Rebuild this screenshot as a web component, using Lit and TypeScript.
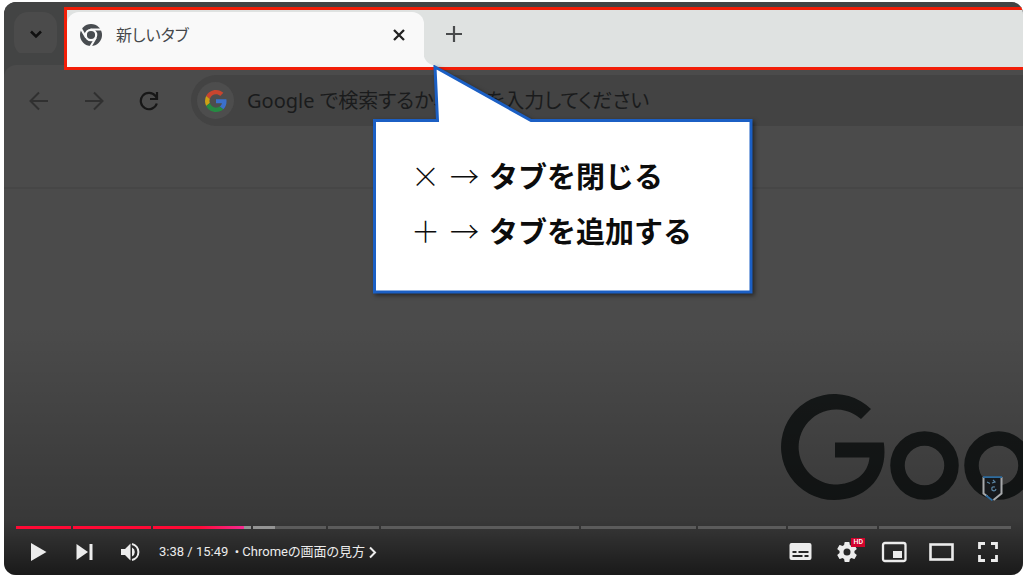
import { LitElement, html, css, svg } from "lit";
import { customElement, state } from "lit/decorators.js";

interface Chapter {
  span: number;
  played: number;
  loaded: number;
}

const CHAPTERS: Chapter[] = [
  { span: 55, played: 100, loaded: 100 },
  { span: 78, played: 100, loaded: 100 },
  { span: 98, played: 93, loaded: 100 },
  { span: 74, played: 0, loaded: 31 },
  { span: 51, played: 0, loaded: 0 },
  { span: 198, played: 0, loaded: 0 },
  { span: 115, played: 0, loaded: 0 },
  { span: 89, played: 0, loaded: 0 },
  { span: 89, played: 0, loaded: 0 },
  { span: 132, played: 0, loaded: 0 },
];

const icon = (size: number, body: unknown) =>
  html`<svg width=${size} height=${size} viewBox="0 0 ${size} ${size}" aria-hidden="true">${body}</svg>`;

/* The browser window shown inside the video frame. */
@customElement("browser-scene")
class BrowserScene extends LitElement {
  static styles = css`
    :host {
      display: flex;
      flex-direction: column;
      flex: 1;
      font-family: "Noto Sans", "Noto Sans CJK JP", sans-serif;
      font-feature-settings: "palt";
      background: #4b4b4b;
    }
    button {
      display: grid;
      place-items: center;
      padding: 0;
      border: 0;
      background: none;
      font: inherit;
    }
    svg {
      display: block;
    }
    .strip {
      display: flex;
      gap: 7px;
      height: 63px;
      box-sizing: border-box;
      padding: 5px 0 0 10px;
      background: #434444;
    }
    .menu {
      width: 43px;
      height: 44px;
      margin-top: 5px;
      border-radius: 14px;
      background: #4b4b4b;
    }
    .frame {
      position: relative;
      z-index: 1;
      display: flex;
      flex: 1;
      box-sizing: border-box;
      height: 63px;
      border: 3px solid #f11e08;
      border-right: 0;
      padding-top: 2px;
      background: #dfe2e1;
    }
    .tab {
      position: relative;
      display: flex;
      align-items: center;
      width: 357px;
      box-sizing: border-box;
      padding: 0 15px 10px 12px;
      border-radius: 12px 12px 0 0;
      background: #f9f9f9;
      color: #45484b;
      font-size: 16px;
      line-height: 24px;
    }
    .tab::after {
      content: "";
      position: absolute;
      left: 100%;
      bottom: 0;
      width: 12px;
      height: 14px;
      background: radial-gradient(circle at 100% 0, transparent 12px, #f9f9f9 13px);
    }
    .name {
      flex: 1;
      margin-left: 13px;
    }
    .tab button {
      width: 20px;
      height: 20px;
    }
    .add {
      width: 24px;
      height: 44px;
      margin-left: 18px;
    }
    .toolbar {
      display: flex;
      align-items: flex-start;
      height: 124px;
      box-sizing: border-box;
      padding: 10px 0 0 22px;
      border-radius: 12px 0 0 0;
      border-bottom: 2px solid #464646;
      background: #4b4b4b;
      box-shadow: -12px -12px 0 #434444;
    }
    .nav {
      display: flex;
      align-items: center;
      gap: 29px;
      height: 51px;
    }
    .nav button {
      width: 26px;
    }
    .omnibox {
      display: flex;
      align-items: center;
      flex: 1;
      gap: 13px;
      height: 51px;
      margin-left: 29px;
      padding-left: 6px;
      border-radius: 26px 0 0 26px;
      background: #434343;
    }
    .badge {
      display: grid;
      place-items: center;
      width: 37px;
      height: 37px;
      border-radius: 50%;
      background: #4d4d4d;
    }
    .search {
      flex: 1;
      min-width: 0;
      padding: 0;
      border: 0;
      outline: 0;
      background: none;
      color: #1a1b1c;
      font: inherit;
      font-feature-settings: inherit;
      font-size: 20px;
      line-height: 30px;
    }
    .search::placeholder {
      color: #1a1b1c;
      opacity: 1;
    }
    .page {
      display: flex;
      flex: 1;
      justify-content: flex-end;
      align-items: flex-end;
      overflow: hidden;
      padding-bottom: 74px;
    }
  `;

  render() {
    return html`
      <div class="strip">
        <button class="menu" aria-label="タブを検索">
          ${icon(16, svg`<path d="M3 5.500 8 10.500 13 5.500" fill="none" stroke="#101010" stroke-width="2.600"/>`)}
        </button>
        <div class="frame">
          <div class="tab">
            ${icon(24, svg`
              <circle cx="12" cy="12" r="11" fill="#484c50"/>
              <circle cx="12" cy="12" r="5.200" fill="#484c50" stroke="#f9f9f9" stroke-width="2.200"/>
              <path d="M11.500 6.500H22.500M7.200 14.700 1.800 5.400M16.900 14.500 11.300 24" stroke="#f9f9f9" stroke-width="2.100" fill="none"/>`)}
            <span class="name">新しいタブ</span>
            <button aria-label="タブを閉じる">
              ${icon(16, svg`<path d="m3 3 10 10M13 3 3 13" stroke="#222" stroke-width="2.300"/>`)}
            </button>
          </div>
          <button class="add" aria-label="新しいタブ">
            ${icon(18, svg`<path d="M9 1v16M1 9h16" stroke="#484a4b" stroke-width="2.200"/>`)}
          </button>
        </div>
      </div>
      <div class="toolbar">
        <div class="nav">
          <button aria-label="戻る">
            ${icon(20, svg`<path d="M19 10H2M10 1.500 1.500 10 10 18.500" fill="none" stroke="#303030" stroke-width="2"/>`)}
          </button>
          <button aria-label="進む">
            ${icon(20, svg`<path d="M1 10h17M10 1.500 18.500 10 10 18.500" fill="none" stroke="#303030" stroke-width="2"/>`)}
          </button>
          <button aria-label="再読み込み">
            ${icon(20, svg`<path d="M17.800 12.500A8.200 8.200 0 1 1 16.500 5L18 7" fill="none" stroke="#171717" stroke-width="2.200"/><path d="M18 1v7h-7" fill="none" stroke="#171717" stroke-width="2.200"/>`)}
          </button>
        </div>
        <div class="omnibox">
          <span class="badge">
            <svg width="22" height="22" viewBox="0 0 48 48" aria-hidden="true">
              <path fill="#c8452f" d="M24 9.500c3.540 0 6.710 1.220 9.210 3.600l6.850-6.850C35.900 2.380 30.470 0 24 0 14.620 0 6.510 5.380 2.560 13.220l7.980 6.190C12.430 13.720 17.740 9.500 24 9.500z"/>
              <path fill="#3b70cc" d="M46.980 24.550c0-1.570-.15-3.090-.38-4.550H24v9.020h12.940c-.58 2.960-2.260 5.480-4.780 7.180l7.730 6c4.510-4.180 7.090-10.360 7.090-17.650z"/>
              <path fill="#cda015" d="M10.530 28.590A14.500 14.500 0 0 1 9.770 24c0-1.600.27-3.140.76-4.590l-7.980-6.190A23.900 23.900 0 0 0 0 24c0 3.880.92 7.540 2.560 10.780z"/>
              <path fill="#268a42" d="M24 48c6.480 0 11.930-2.130 15.890-5.810l-7.730-6c-2.150 1.450-4.920 2.300-8.160 2.300-6.260 0-11.570-4.220-13.470-9.910l-7.980 6.190C6.510 42.620 14.620 48 24 48z"/>
            </svg>
          </span>
          <input class="search" type="text" aria-label="検索" placeholder="Google で検索するか、URL を入力してください" />
        </div>
      </div>
      <div class="page">
        <svg width="243" height="108" viewBox="0 0 243 108" role="img" aria-label="Google">
          <path d="M91 16A53 53 0 1 0 54 107C84 107 104.500 87 104.500 59Q104.500 54 103.800 49.500H55V64.500H89.500C88 81 75 91.500 54 91.500A37.500 37.500 0 1 1 81 26Z" fill="#161919"/>
          <g fill="none" stroke="#161919" stroke-width="14.500">
            <circle cx="144.500" cy="72.500" r="27"/>
            <circle cx="218.500" cy="72.500" r="27"/>
          </g>
        </svg>
      </div>
    `;
  }
}

/* Speech bubble that points at the tab's edge. */
@customElement("tab-callout")
class TabCallout extends LitElement {
  static styles = css`
    :host {
      display: block;
      width: 380px;
      box-sizing: border-box;
      padding: 83px 0 34px 38px;
      color: #0c0c0c;
      font-family: "Noto Sans CJK JP", sans-serif;
    }
    .bubble {
      position: absolute;
      left: 0;
      top: 0;
      filter: drop-shadow(2px 2px 2px rgba(0, 0, 0, 0.5));
    }
    .line {
      position: relative;
      display: flex;
      gap: 10px;
      font-size: 29px;
      line-height: 55px;
    }
    .sign {
      width: 29px;
      font-weight: 300;
      text-align: center;
    }
    .text {
      font-weight: 700;
    }
  `;

  render() {
    const lines = [
      ["×", "タブを閉じる"],
      ["\uff0b", "タブを追加する"],
    ];
    return html`
      <svg class="bubble" width="380" height="230" viewBox="0 0 380 230" aria-hidden="true">
        <path d="M1.500 55.500H64.500L62 2 158 55.500H378V227H1.500Z" fill="#fff" stroke="#1b5fc4" stroke-width="3"/>
      </svg>
      ${lines.map(
        ([sign, text]) => html`<div class="line">
          <span class="sign">${sign}</span><span class="sign">→</span><span class="text">${text}</span>
        </div>`
      )}
    `;
  }
}

@customElement("player-controls")
class PlayerControls extends LitElement {
  static styles = css`
    :host {
      display: block;
      padding: 0 12px;
      color: #ececec;
      font: 13px/20px Roboto, "Noto Sans CJK JP", sans-serif;
    }
    .progress {
      display: flex;
      gap: 2px;
      height: 3px;
    }
    .chapter {
      position: relative;
      flex-basis: 0;
      background: #5b5b5b;
    }
    .loaded,
    .played {
      position: absolute;
      inset: 0 auto 0 0;
    }
    .loaded {
      background: #949494;
    }
    .played {
      background: #ff0a35;
    }
    .head {
      background: linear-gradient(90deg, #ff0a35 50%, #f52a90);
    }
    .bar {
      display: flex;
      align-items: center;
      height: 46px;
    }
    .group {
      display: flex;
      gap: 1px;
    }
    .end {
      margin-left: auto;
    }
    button {
      position: relative;
      display: grid;
      place-items: center;
      width: 46px;
      height: 36px;
      padding: 0;
      border: 0;
      background: none;
      color: inherit;
      font: inherit;
    }
    svg {
      display: block;
      overflow: visible;
    }
    .start {
      display: flex;
    }
    .time {
      margin-left: 5px;
      white-space: pre;
    }
    .title {
      display: flex;
      align-items: center;
      gap: 2px;
      width: auto;
      font-feature-settings: "palt";
    }
    .hd {
      position: absolute;
      top: 4px;
      right: 5px;
      padding: 0 2px;
      background: #d2042d;
      color: #fff;
      font-size: 7px;
      font-weight: 500;
      line-height: 9px;
    }
  `;

  @state() private chapters = CHAPTERS;

  render() {
    return html`
      <div class="progress" role="progressbar" aria-label="再生位置" aria-valuenow="218" aria-valuemax="949">
        ${this.chapters.map(
          (c) => html`<div class="chapter" style="flex-grow:${c.span}">
            <div class="loaded" style="width:${c.loaded}%"></div>
            <div class="played ${c.played < 100 ? "head" : ""}" style="width:${c.played}%"></div>
          </div>`
        )}
      </div>
      <div class="bar">
        <div class="start">
          <button aria-label="再生">
            ${icon(20, svg`<path d="M2 1v18l15.500-9z" fill="currentColor"/>`)}
          </button>
          <button aria-label="次へ">
            ${icon(18, svg`<path d="M.5 1v16L12 9zM13.500 1h3v16h-3z" fill="currentColor"/>`)}
          </button>
          <button aria-label="ミュート">
            ${icon(20, svg`<path d="M0 7v6h4l5.500 5.500v-17L4 7zM11 5.500v9a5 5 0 0 0 0-9z" fill="currentColor"/><path d="M11 2a8.200 8.200 0 0 1 0 16" fill="none" stroke="currentColor" stroke-width="2"/>`)}
          </button>
        </div>
        <span class="time">3:38 / 15:49  • </span>
        <button class="title">
          <span>Chromeの画面の見方</span>
          ${icon(12, svg`<path d="m3 1.500 5 5-5 5" fill="none" stroke="currentColor" stroke-width="2"/>`)}
        </button>
        <div class="group end">
          <button aria-label="字幕">
            ${icon(22, svg`<path fill-rule="evenodd" d="M2.500 2h18q2 0 2 2v13q0 2-2 2h-18q-2 0-2-2V4q0-2 2-2zM3.500 10v2h4v-2zM9.500 10v2h10v-2zM3.500 14v2h10v-2zM15.500 14v2h4v-2z" fill="currentColor"/>`)}
          </button>
          <button aria-label="設定">
            ${icon(24, svg`<path d="M19.430 12.980c.04-.32.07-.64.07-.98s-.03-.66-.07-.98l2.110-1.650a.5.5 0 0 0 .12-.64l-2-3.460a.5.5 0 0 0-.61-.22l-2.490 1a7.300 7.300 0 0 0-1.690-.98l-.38-2.650A.5.5 0 0 0 14 2h-4a.5.5 0 0 0-.49.420l-.38 2.650c-.61.25-1.170.59-1.690.98l-2.490-1a.5.5 0 0 0-.61.22l-2 3.460a.5.5 0 0 0 .12.640l2.110 1.650a8 8 0 0 0 0 1.960l-2.110 1.650a.5.5 0 0 0-.12.640l2 3.460c.12.220.39.300.61.220l2.490-1c.52.400 1.080.730 1.690.980l.38 2.650c.03.240.240.420.490.420h4c.25 0 .46-.18.490-.42l.38-2.650c.61-.25 1.170-.59 1.690-.98l2.490 1c.23.090.49 0 .61-.22l2-3.460a.5.5 0 0 0-.12-.64zM12 15.500a3.500 3.500 0 1 1 0-7 3.500 3.500 0 0 1 0 7z" fill="currentColor"/>`)}
            <span class="hd">HD</span>
          </button>
          <button aria-label="ミニプレーヤー">
            ${icon(24, svg`<rect x="1" y="3" width="22.500" height="18" rx="2" fill="none" stroke="currentColor" stroke-width="2.300"/><path d="M11 11h9v7h-9z" fill="currentColor"/>`)}
          </button>
          <button aria-label="シアターモード">
            ${icon(24, svg`<rect x="1.500" y="4.500" width="22" height="15" fill="none" stroke="currentColor" stroke-width="2.600"/>`)}
          </button>
          <button aria-label="全画面">
            ${icon(20, svg`<path d="M1.500 7V1.500H7M13 1.500h5.500V7M18.500 13v5.500H13M7 18.500H1.500V13" fill="none" stroke="currentColor" stroke-width="2.800"/>`)}
          </button>
        </div>
      </div>
    `;
  }
}

@customElement("app-root")
class AppRoot extends LitElement {
  static styles = css`
    :host {
      display: block;
      padding: 2px 1px 3px 4px;
      background: #fff;
    }
    .player {
      position: relative;
      display: flex;
      flex-direction: column;
      aspect-ratio: 16 / 9;
      overflow: hidden;
      border-radius: 12px;
    }
    .callout {
      position: absolute;
      left: 369px;
      top: 63px;
      z-index: 2;
    }
    .shade {
      position: absolute;
      inset: auto 0 0 0;
      height: 250px;
      background: linear-gradient(rgba(0, 0, 0, 0), rgba(0, 0, 0, 0.25) 78%, rgba(0, 0, 0, 0.66));
    }
    .mark {
      position: absolute;
      right: 20px;
      bottom: 73px;
    }
    .controls {
      position: absolute;
      inset: auto 0 0 0;
    }
  `;

  render() {
    return html`
      <main class="player">
        <browser-scene></browser-scene>
        <tab-callout class="callout"></tab-callout>
        <div class="shade"></div>
        <svg class="mark" width="21" height="26" viewBox="0 0 21 26" aria-hidden="true">
          <path d="M1.500 1.500h18v16L10.500 24.500l-9-7z" fill="#16191c"/>
          <path d="M1.500 1v16.500l4 3M19.500 1v16.500l-8 6.500" fill="none" stroke="#a7a9ab" stroke-width="2"/>
          <path d="M1 1.200h19M4 19.500l6.500 5" fill="none" stroke="#2e6c9f" stroke-width="1.800"/>
          <path d="m5 6 3 1.500M11 4l2 2-3 1M13 11q-4-1-3 3 3 2 4-1" fill="none" stroke="#5d87a5" stroke-width="1.200"/>
        </svg>
        <player-controls class="controls"></player-controls>
      </main>
    `;
  }
}
